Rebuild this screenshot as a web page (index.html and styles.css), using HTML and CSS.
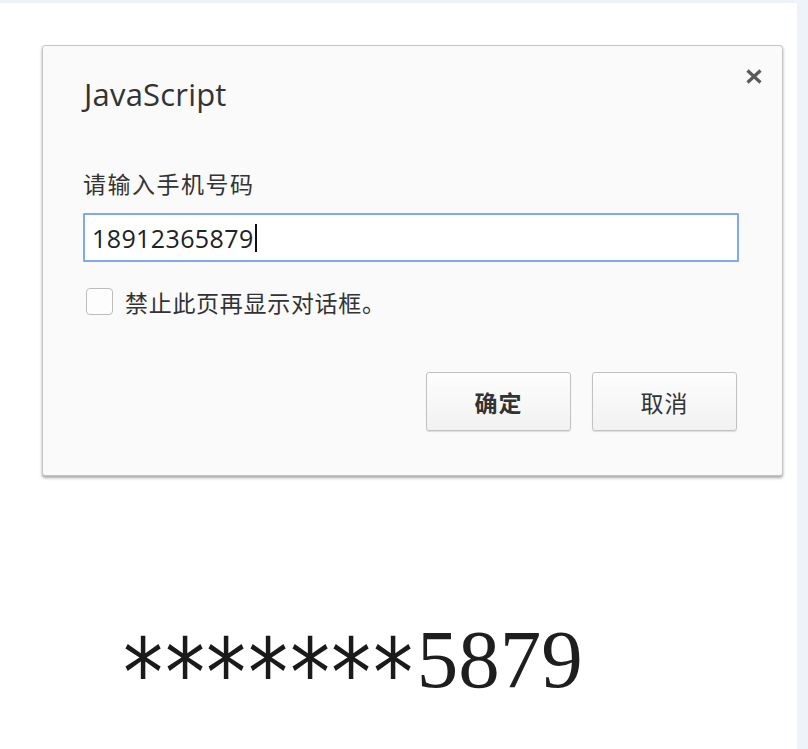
FILE: index.html
```html
<!DOCTYPE html>
<html lang="zh-CN">
<head>
<meta charset="utf-8">
<title>JavaScript prompt</title>
<link rel="stylesheet" href="styles.css">
</head>
<body>
<div class="topstrip"></div>
<div class="main">
  <div class="content">
    <div class="dialog">
      <div class="header">
        <div class="title">JavaScript</div>
        <div class="close">
          <svg width="18" height="15" viewBox="0 0 18 15"><path d="M2.5 1.5 L15.5 13.5 M15.5 1.5 L2.5 13.5" stroke="#5a5a5a" stroke-width="3.2" stroke-linecap="butt"/></svg>
        </div>
      </div>
      <div class="label">请输入手机号码</div>
      <div class="input"><span class="value">18912365879</span><span class="caret"></span></div>
      <div class="check-row">
        <span class="checkbox"></span>
        <span class="check-label">禁止此页再显示对话框。</span>
      </div>
      <div class="buttons">
        <div class="btn btn-ok">确定</div>
        <div class="btn">取消</div>
      </div>
    </div>
    <div class="masked"><span class="star">*</span><span class="star">*</span><span class="star">*</span><span class="star">*</span><span class="star">*</span><span class="star">*</span><span class="star">*</span><span class="digits">5879</span></div>
  </div>
  <div class="sidestrip"></div>
</div>
</body>
</html>
```

FILE: styles.css
```css
html, body {
  margin: 0;
  padding: 0;
  background: #ffffff;
}
body {
  width: 808px;
  height: 749px;
  overflow: hidden;
  font-family: "Open Sans", "Noto Sans CJK SC", sans-serif;
  color: #333333;
}
.topstrip {
  height: 3px;
  background: #eef3fa;
}
.main {
  display: flex;
  height: 746px;
}
.content {
  width: 797px;
  padding-top: 42px;
}
.sidestrip {
  flex: 1;
  background: #eef3fa;
}
.dialog {
  margin-left: 42px;
  width: 741px;
  box-sizing: border-box;
  background: #fafafa;
  border: 1px solid #c6c6c6;
  border-radius: 3px;
  box-shadow: 0 2px 3px rgba(0, 0, 0, 0.35);
  padding: 0 19px 44px 40px;
}
.header {
  display: flex;
  justify-content: space-between;
  align-items: flex-start;
  margin-top: 20px;
}
.title {
  padding-top: 8px;
  margin-left: 1px;
  font-family: "Open Sans", sans-serif;
  font-size: 31px;
  line-height: 40px;
  letter-spacing: 0.2px;
  color: #333333;
}
.close {
  margin-top: 3px;
  width: 18px;
  height: 15px;
}
.close svg {
  display: block;
}
.label {
  margin-top: 52px;
  font-family: "Noto Sans CJK SC", sans-serif;
  font-size: 23px;
  letter-spacing: 1.5px;
  line-height: 34px;
  color: #333333;
}
.input {
  margin-top: 13px;
  width: 656px;
  height: 49px;
  box-sizing: border-box;
  border: 2px solid #7fa9f5;
  border-radius: 1px;
  background: #ffffff;
  display: flex;
  align-items: center;
  padding-left: 7px;
}
.value {
  font-family: "Open Sans", sans-serif;
  font-size: 25px;
  color: #222222;
  letter-spacing: 0.4px;
}
.caret {
  width: 2px;
  height: 28px;
  background: #111111;
  margin-left: 1px;
}
.check-row {
  margin-top: 25px;
  display: flex;
  align-items: center;
  height: 29px;
  padding-left: 3px;
}
.checkbox {
  width: 27px;
  height: 27px;
  box-sizing: border-box;
  border: 1px solid #bdbdbd;
  border-radius: 4px;
  background: #fdfdfd;
}
.check-label {
  margin-left: 12px;
  font-family: "Noto Sans CJK SC", sans-serif;
  font-size: 23px;
  letter-spacing: 0.7px;
  color: #333333;
}
.buttons {
  margin-top: 56px;
  margin-right: 26px;
  display: flex;
  justify-content: flex-end;
  gap: 21px;
}
.btn {
  width: 145px;
  height: 59px;
  box-sizing: border-box;
  border: 1px solid #c2c2c2;
  border-radius: 3px;
  background: linear-gradient(#fdfdfd, #f2f2f2);
  box-shadow: 0 1px 1px rgba(0, 0, 0, 0.12);
  display: flex;
  align-items: center;
  justify-content: center;
  font-family: "Noto Sans CJK SC", sans-serif;
  font-size: 23px;
  letter-spacing: 1px;
  color: #333333;
}
.btn-ok {
  font-weight: 700;
}
.masked {
  margin-top: 133px;
  padding-left: 113px;
  font-family: "Liberation Serif", serif;
  font-size: 83px;
  line-height: 100px;
  color: #1e1e1e;
  white-space: nowrap;
}
.star {
  display: inline-block;
  width: 41.7px;
  height: 116px;
  font-family: "DejaVu Sans Mono", monospace;
  font-size: 100px;
  line-height: 116px;
  vertical-align: -22px;
  transform-origin: 30px 40px;
  transform: scale(0.8, 0.95);
  color: #1a1a1a;
}
.digits {
  margin-left: 12px;
}
```
